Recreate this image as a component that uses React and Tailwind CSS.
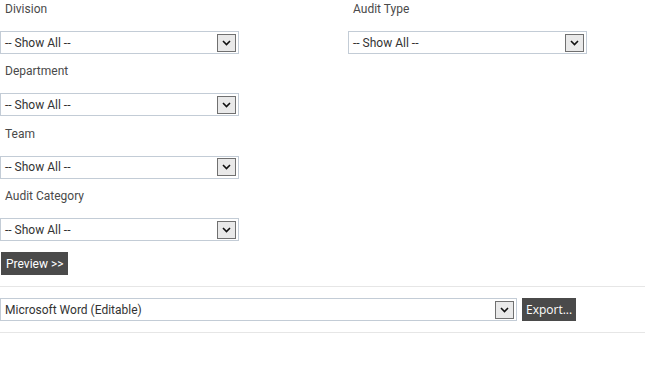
import React from "react";

const font = { fontFamily: "Roboto, 'Liberation Sans', sans-serif" };

const Arrow = () => (
  <div className="flex h-[18px] w-[19px] items-center justify-center border border-[#707070] bg-[#e9e9e9]">
    <svg width="9" height="6" viewBox="0 0 9 6">
      <path d="M1 1 L4.5 4.5 L8 1" fill="none" stroke="#111" strokeWidth="1.6" />
    </svg>
  </div>
);

const FakeSelect = ({ value, width }) => (
  <div
    className={`flex h-[23px] ${width} items-center justify-between border border-[#c3ccd6] bg-white pl-[4px] pr-[2px] text-[12px] text-[#333]`}
  >
    <span>{value}</span>
    <Arrow />
  </div>
);

const Field = ({ label }) => (
  <div className="flex flex-col">
    <div className="h-[18px] pl-[5px] text-[12px] leading-[18px] text-[#4a4a4a]">{label}</div>
    <div className="mt-[13px]">
      <FakeSelect value="-- Show All --" width="w-[239px]" />
    </div>
  </div>
);

export default function App() {
  return (
    <div className="h-[370px] w-[645px] bg-white" style={font}>
      <div className="flex">
        <div className="flex w-[348px] flex-col gap-[8.4px]">
          <Field label="Division" />
          <Field label="Department" />
          <Field label="Team" />
          <Field label="Audit Category" />
        </div>
        <div className="flex flex-col">
          <Field label="Audit Type" />
        </div>
      </div>
      <button className="ml-[1px] mt-[11px] h-[23px] bg-[#4a4a4a] px-[5px] text-[12px] text-white">
        Preview &gt;&gt;
      </button>
      <div className="mt-[11px] border-t border-[#e6e6e6]" />
      <div className="mt-[11px] flex items-center">
        <FakeSelect value="Microsoft Word (Editable)" width="w-[517px]" />
        <button
          className="ml-[5px] h-[23px] bg-[#4a4a4a] px-[4px] text-[12px] text-white"
          style={{ fontFamily: "'Open Sans', sans-serif" }}
        >
          Export...
        </button>
      </div>
      <div className="mt-[11px] border-t border-[#e6e6e6]" />
    </div>
  );
}
